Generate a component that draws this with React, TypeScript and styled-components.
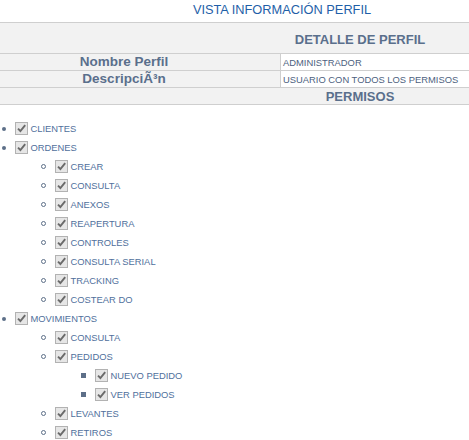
import * as React from 'react';
import styled, { createGlobalStyle } from 'styled-components';

const GlobalStyle = createGlobalStyle`
    html, body {
        margin: 0;
        padding: 0;
        background: #fff;
        overflow: hidden;
    }
    body {
        font-family: "Liberation Sans", Arial, sans-serif;
    }
`;

interface PermisoInterface {
    name: string;
    children?: PermisoInterface[];
}

const permisos: PermisoInterface[] = [
    { name: 'CLIENTES' },
    {
        name: 'ORDENES',
        children: [
            { name: 'CREAR' },
            { name: 'CONSULTA' },
            { name: 'ANEXOS' },
            { name: 'REAPERTURA' },
            { name: 'CONTROLES' },
            { name: 'CONSULTA SERIAL' },
            { name: 'TRACKING' },
            { name: 'COSTEAR DO' },
        ],
    },
    {
        name: 'MOVIMIENTOS',
        children: [
            { name: 'CONSULTA' },
            {
                name: 'PEDIDOS',
                children: [
                    { name: 'NUEVO PEDIDO' },
                    { name: 'VER PEDIDOS' },
                ],
            },
            { name: 'LEVANTES' },
            { name: 'RETIROS' },
        ],
    },
];

const Page = styled.div`
    width: 760px;
`;

const Title = styled.h2`
    width: 564px;
    margin: 0;
    padding-top: 1px;
    height: 21px;
    text-align: center;
    font-size: 12.8px;
    font-weight: normal;
    line-height: 18px;
    color: #1f5fa8;
`;

const Table = styled.div`
    width: 718px;
    display: grid;
    grid-template-columns: 280px 438px;
    border-top: 1px solid #cfcfcf;
`;

const HeadCell = styled.div<{tall?: boolean}>`
    grid-column: 1 / 3;
    height: ${props => props.tall ? '30px' : '16px'};
    line-height: ${props => props.tall ? '34px' : '17px'};
    background: #f2f2f2;
    border-bottom: 1px solid #cfcfcf;
    text-align: center;
    font-size: 13px;
    font-weight: bold;
    color: #5a6f8c;
    padding-left: 2px;
`;

const LabelCell = styled.div`
    height: 16px;
    line-height: 16px;
    background: #f2f2f2;
    border-bottom: 1px solid #cfcfcf;
    padding-right: 32px;
    text-align: center;
    font-size: 13.5px;
    font-weight: bold;
    color: #5a6f8c;
`;

const ValueCell = styled.div`
    height: 16px;
    line-height: 17px;
    background: #fff;
    border-bottom: 1px solid #cfcfcf;
    border-left: 1px solid #cfcfcf;
    padding-left: 2px;
    font-size: 9.4px;
    color: #4d5f80;
`;

const Tree = styled.ul<{level: number}>`
    list-style: none;
    margin: ${props => props.level === 0 ? '14px 0 0 0' : '0'};
    padding: 0 0 0 ${props => props.level === 0 ? '0' : '40px'};
`;

const Row = styled.div`
    display: flex;
    align-items: center;
    height: 19px;
`;

const Bullet = styled.span<{level: number}>`
    flex: none;
    width: ${props => props.level === 0 ? '4px' : props.level === 1 ? '3px' : '5px'};
    height: ${props => props.level === 0 ? '4px' : props.level === 1 ? '3px' : '5px'};
    margin: 0 ${props => props.level === 0 ? '9px' : '8.5px'} 0 ${props => props.level === 0 ? '1.5px' : '1px'};
    border-radius: ${props => props.level === 2 ? '0' : '50%'};
    background: ${props => props.level === 1 ? 'transparent' : '#5d6f88'};
    border: ${props => props.level === 1 ? '1px solid #5d6f88' : 'none'};
    box-sizing: content-box;
`;

const Check = styled.span`
    flex: none;
    width: 11px;
    height: 11px;
    margin-right: 3px;
    border: 1px solid #b2b2b2;
    background: #e6e6e6;
    display: flex;
    align-items: center;
    justify-content: center;
`;

const Label = styled.span`
    font-size: 9.4px;
    color: #50709c;
    white-space: nowrap;
`;

const CheckMark = () => (
    <svg width="11" height="11" viewBox="0 0 11 11">
        <path d="M2 5.6 L4.4 8 L9.2 2.2" fill="none" stroke="#6a6a6a" strokeWidth="1.9" />
    </svg>
);

const PermisoTree = ({ items, level }: { items: PermisoInterface[]; level: number }) => (
    <Tree level={level}>
        {items.map((item, i) => (
            <li key={item.name + i}>
                <Row>
                    <Bullet level={level} />
                    <Check><CheckMark /></Check>
                    <Label>{item.name}</Label>
                </Row>
                {item.children ? <PermisoTree items={item.children} level={level + 1} /> : null}
            </li>
        ))}
    </Tree>
);

export default function App() {
    return (
        <Page>
            <GlobalStyle />
            <Title>VISTA INFORMACIÓN PERFIL</Title>
            <Table>
                <HeadCell tall>DETALLE DE PERFIL</HeadCell>
                <LabelCell>Nombre Perfil</LabelCell>
                <ValueCell>ADMINISTRADOR</ValueCell>
                <LabelCell>DescripciÃ³n</LabelCell>
                <ValueCell>USUARIO CON TODOS LOS PERMISOS</ValueCell>
                <HeadCell>PERMISOS</HeadCell>
            </Table>
            <PermisoTree items={permisos} level={0} />
        </Page>
    );
}
